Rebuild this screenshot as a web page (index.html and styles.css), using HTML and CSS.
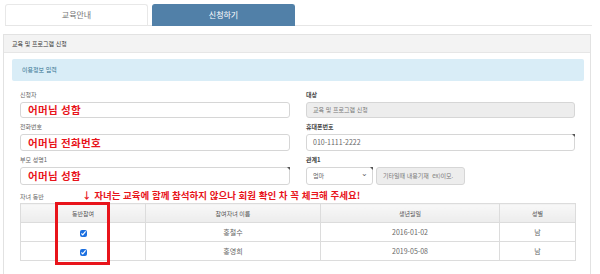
FILE: index.html
```html
<!DOCTYPE html>
<html lang="ko">
<head>
  <meta charset="UTF-8" />
  <meta name="viewport" content="width=device-width, initial-scale=1.0" />
  <title>교육 및 프로그램 신청</title>
  <link rel="stylesheet" href="styles.css">
</head>
<body>
  <div class="tabs">
    <div class="tab">교육안내</div>
    <div class="tab active">신청하기</div>
  </div>

  <div class="panel">
    <div class="panel-head">교육 및 프로그램 신청</div>
    <div class="panel-body">
      <div class="info">이용정보 입력</div>

      <div class="form-grid">
        <div class="field">
          <label>신청자</label>
          <div class="input big">어머님 성함</div>
        </div>
        <div class="field">
          <label class="dark">대상</label>
          <div class="input disabled">교육 및 프로그램 신청</div>
        </div>

        <div class="field">
          <label>전화번호</label>
          <div class="input big tall">어머님 전화번호</div>
        </div>
        <div class="field">
          <label class="dark">휴대폰번호</label>
          <div class="input tall mark">010-1111-2222</div>
        </div>

        <div class="field">
          <label>부모 성명1</label>
          <div class="input big taller mark">어머님 성함</div>
        </div>
        <div class="field">
          <label class="dark">관계1</label>
          <div class="relation">
            <div class="input select mark">엄마<span class="caret">&#8964;</span></div>
            <div class="input disabled etc">기타일때 내용기재 &nbsp;ex)이모.</div>
          </div>
        </div>
      </div>

      <div class="kids-head">
        <span class="kids-label">자녀 동반</span>
        <span class="notice">↓ 자녀는 교육에 함께 참석하지 않으나 회원 확인 차 꼭 체크해 주세요!</span>
      </div>

      <div class="table-wrap">
        <table>
          <thead>
            <tr><th class="c1">동반참여</th><th class="c2">참여자녀 이름</th><th class="c3">생년월일</th><th>성별</th></tr>
          </thead>
          <tbody>
            <tr><td><input type="checkbox" checked></td><td>홍철수</td><td>2016-01-02</td><td>남</td></tr>
            <tr><td><input type="checkbox" checked></td><td>홍영희</td><td>2019-05-08</td><td>남</td></tr>
          </tbody>
        </table>
        <div class="highlight"></div>
      </div>
    </div>
  </div>
</body>
</html>
```

FILE: styles.css
```css
body {
  margin: 0;
  background: #fff;
  font-family: "Noto Sans CJK KR", "Noto Sans", sans-serif;
  color: #555;
  width: 600px;
  height: 274px;
  overflow: hidden;
}
.tabs {
  display: flex;
  gap: 4px;
  margin: 4px 8px 0 5px;
  border-bottom: 1px solid #e6e6e6;
  height: 21px;
}
.tab {
  box-sizing: border-box;
  width: 143px;
  height: 21px;
  border: 1px solid #e8e8e8;
  border-bottom: none;
  border-radius: 3px 3px 0 0;
  text-align: center;
  font-size: 8px;
  line-height: 20px;
  color: #777;
}
.tab.active {
  background: #5180a8;
  border-color: #5180a8;
  color: #fff;
  height: 22px;
}
.panel {
  margin: 8px 9px 0 3px;
  border: 1px solid #e2e2e2;
  border-bottom: none;
  height: 239px;
  overflow: hidden;
}
.panel-head {
  background: #f3f3f3;
  border-bottom: 1px solid #e6e6e6;
  height: 17px;
  line-height: 17px;
  padding-left: 8px;
  font-size: 6px;
  color: #333;
}
.panel-body {
  padding: 6px 6px 0 8px;
}
.info {
  background: #d9edf7;
  border-radius: 2px;
  height: 22px;
  line-height: 22px;
  padding-left: 10px;
  font-size: 6px;
  color: #31708f;
}
.form-grid {
  display: grid;
  grid-template-columns: 270px 269px;
  column-gap: 16px;
  margin: 9px 0 0 8px;
  row-gap: 4px;
}
.field label {
  display: block;
  font-size: 6px;
  height: 9px;
  line-height: 9px;
  color: #666;
  margin-bottom: 3px;
}
.field label.dark {
  color: #444;
  font-weight: bold;
}
.input {
  position: relative;
  box-sizing: border-box;
  height: 16px;
  border: 1px solid #d6d6d6;
  border-radius: 3px;
  background: #fff;
  font-size: 7px;
  line-height: 14px;
  padding-left: 6px;
  color: #666;
  white-space: nowrap;
}
.input.tall {
  height: 17px;
  line-height: 15px;
}
.input.taller {
  height: 18px;
  line-height: 16px;
}
.input.big {
  color: #e8141b;
  font-weight: bold;
  font-size: 10.5px;
  letter-spacing: 0.3px;
  padding-left: 7px;
}
.input.disabled {
  background: #ededed;
  color: #777;
  font-size: 6px;
}
.mark::after {
  content: "";
  position: absolute;
  top: -1px;
  right: -1px;
  border-top: 3px solid #555;
  border-left: 3px solid transparent;
}
.relation {
  display: flex;
  gap: 3px;
}
.input.select {
  width: 67px;
  height: 18px;
  line-height: 16px;
  font-size: 6px;
}
.caret {
  position: absolute;
  right: 4px;
  top: -3px;
  font-size: 8px;
  color: #666;
}
.input.etc {
  width: 89px;
  height: 18px;
  line-height: 16px;
}
.kids-head {
  display: flex;
  align-items: flex-end;
  margin: 4px 0 0 8px;
  height: 12px;
}
.kids-label {
  font-size: 6px;
  color: #666;
  width: 62px;
  line-height: 9px;
}
.notice {
  color: #e8141b;
  font-weight: bold;
  font-size: 9.5px;
  line-height: 12px;
  white-space: nowrap;
}
.table-wrap {
  position: relative;
  margin: 2px 0 0 8px;
  width: 556px;
}
table {
  width: 100%;
  border-collapse: collapse;
  font-size: 7px;
  color: #666;
}
th, td {
  border: 1px solid #dcdcdc;
  text-align: center;
  height: 18px;
  padding: 0;
}
th {
  background: linear-gradient(#f8f8f8, #ececec);
  font-weight: normal;
  font-size: 6px;
  color: #555;
}
th.c1 {
  width: 124px;
}
th.c2 {
  width: 174px;
}
th.c3 {
  width: 178px;
}
td input {
  width: 7px;
  height: 7px;
  margin: 0;
  accent-color: #1b6fe0;
  vertical-align: middle;
}
.highlight {
  position: absolute;
  left: 35px;
  top: -1px;
  width: 49px;
  height: 57px;
  border: 3px solid #e8141b;
}
```
